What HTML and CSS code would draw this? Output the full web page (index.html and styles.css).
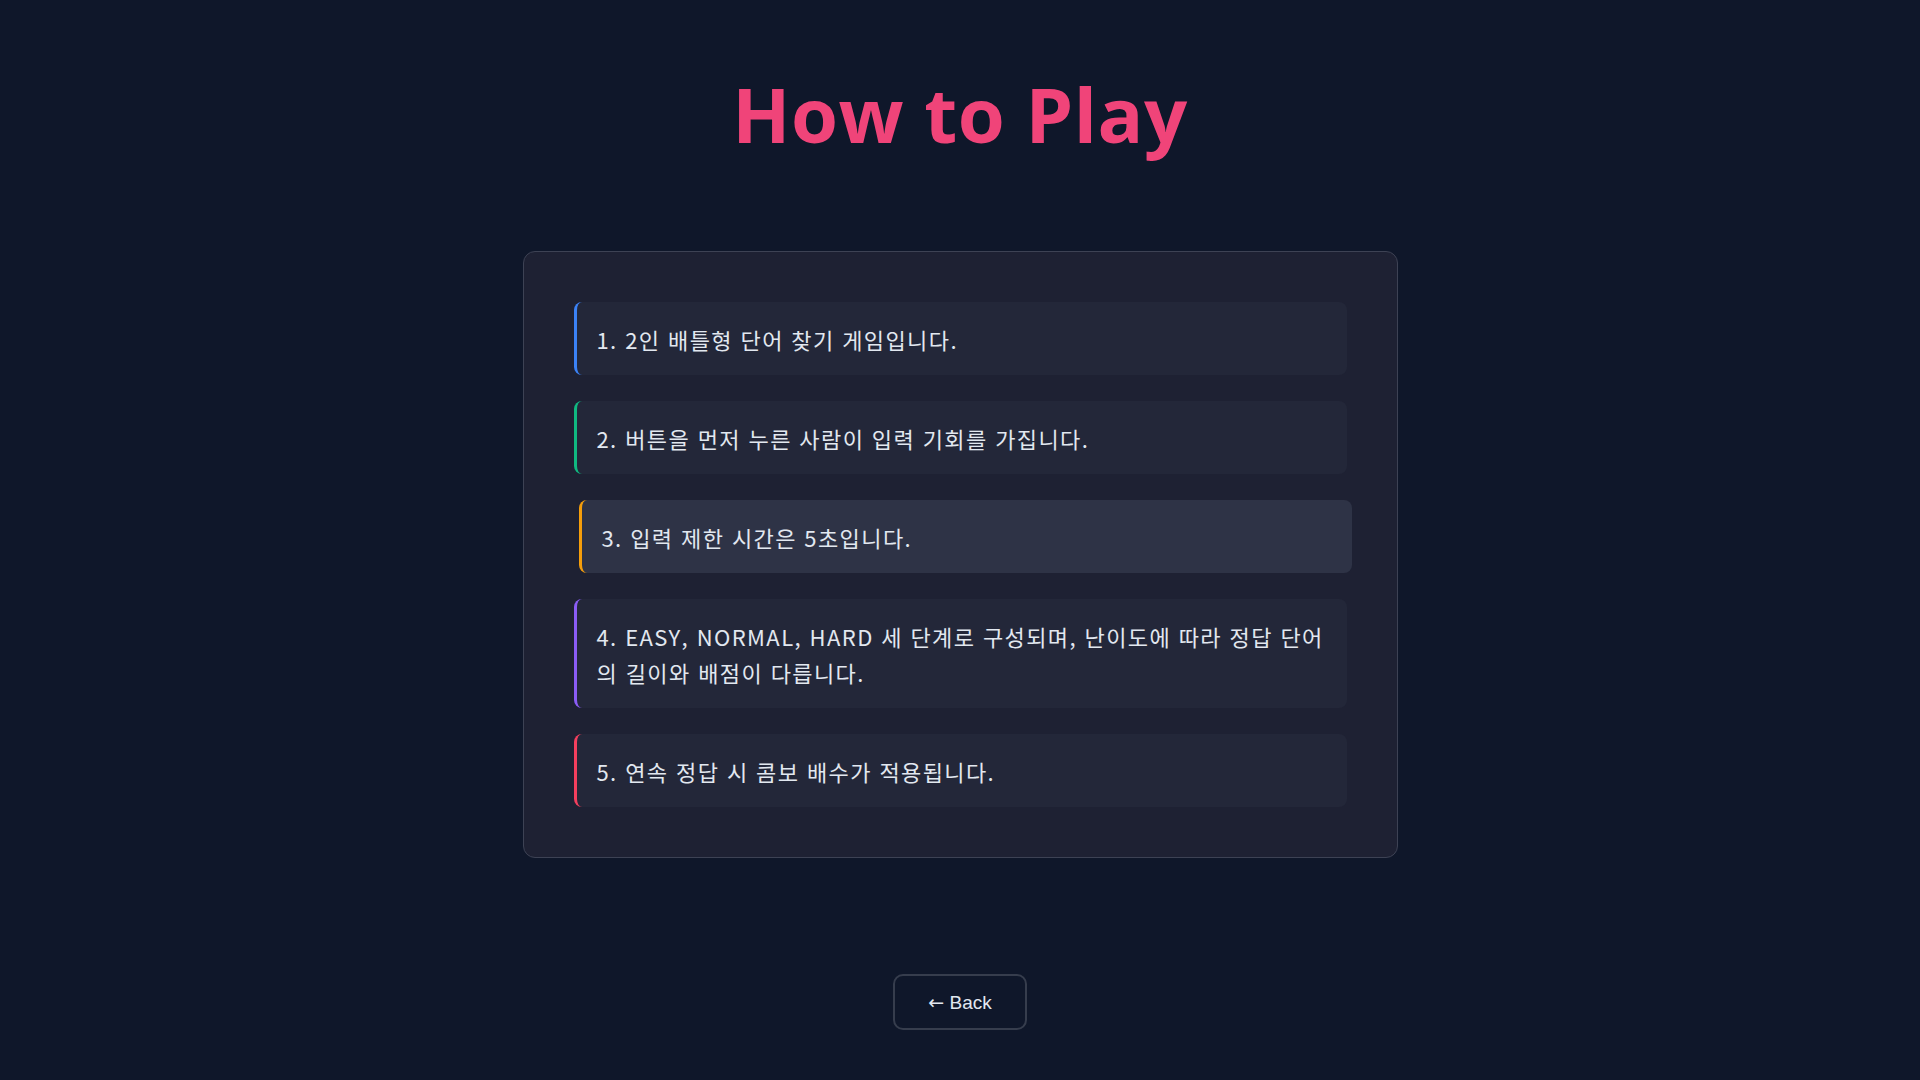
FILE: index.html
```html
<!DOCTYPE html>
<html lang="ko">
<head>
<meta charset="utf-8">
<title>How to Play</title>
<link rel="stylesheet" href="styles.css">
</head>
<body>
<main class="page">
  <h1 class="title">How to Play</h1>
  <section class="rules">
    <div class="rule rule-blue">1. 2인 배틀형 단어 찾기 게임입니다.</div>
    <div class="rule rule-green">2. 버튼을 먼저 누른 사람이 입력 기회를 가집니다.</div>
    <div class="rule rule-amber is-hover">3. 입력 제한 시간은 5초입니다.</div>
    <div class="rule rule-purple">4. EASY, NORMAL, HARD 세 단계로 구성되며, 난이도에 따라 정답 단어의 길이와 배점이 다릅니다.</div>
    <div class="rule rule-red">5. 연속 정답 시 콤보 배수가 적용됩니다.</div>
  </section>
  <button class="back"><span class="arrow">←</span> Back</button>
</main>
</body>
</html>
```

FILE: styles.css
```css
html, body {
  margin: 0;
  padding: 0;
  background: #0f172a;
}
body {
  min-height: 1080px;
  font-family: "Open Sans", "Noto Sans CJK KR", sans-serif;
}
.page {
  display: flex;
  flex-direction: column;
  align-items: center;
  padding-top: 66px;
}
.title {
  margin: 0 0 89px;
  font-size: 76px;
  line-height: 96px;
  font-weight: 700;
  color: #f04479;
  letter-spacing: 0.5px;
}
.rules {
  box-sizing: border-box;
  width: 875px;
  padding: 50px;
  background: #1e2133;
  border: 1px solid #3d4254;
  border-radius: 12px;
  display: flex;
  flex-direction: column;
  gap: 26px;
}
.rule {
  padding: 18.5px 20px;
  background: #232739;
  border-left: 3px solid #3b82f6;
  border-radius: 8px;
  color: #e2e8f0;
  font-family: "Noto Sans CJK KR", "Open Sans", sans-serif;
  font-size: 22px;
  line-height: 36px;
  letter-spacing: 1.4px;
}
.rule-blue { border-left-color: #3b82f6; }
.rule-green { border-left-color: #10b981; }
.rule-amber { border-left-color: #f59e0b; }
.rule-purple { border-left-color: #8b5cf6; }
.rule-red { border-left-color: #f43f5e; }
.is-hover {
  background: #2e3346;
  transform: translateX(5px);
}
.back {
  margin-top: 116px;
  width: 134px;
  height: 56px;
  background: #0f172a;
  border: 2px solid #363d4d;
  border-radius: 10px;
  color: #e2e8f0;
  font-family: "Liberation Sans", Arial, sans-serif;
  font-size: 19px;
}
.arrow {
  font-family: "DejaVu Sans", sans-serif;
  font-size: 19px;
}
```
